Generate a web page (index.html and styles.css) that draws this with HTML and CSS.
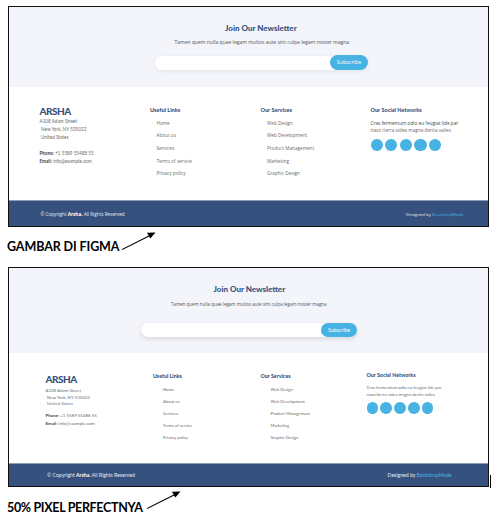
FILE: index.html
```html
<!DOCTYPE html>
<html lang="en">
<head>
<meta charset="utf-8">
<title>Arsha footer comparison</title>
<link rel="stylesheet" href="styles.css">
</head>
<body>
<section class="frame design">
  <div class="newsletter">
    <h2>Join Our Newsletter</h2>
    <p>Tamen quem nulla quae legam multos aute sint culpa legam noster magna</p>
    <div class="subscribe"><span class="button">Subscribe</span></div>
  </div>
  <div class="columns">
    <div class="contact">
      <h3>ARSHA</h3>
      <p>A108 Adam Street</p>
      <p class="indent">New York, NY 535022</p>
      <p class="indent">United States</p>
      <p class="phone"><b>Phone:</b> +1 5589 55488 55</p>
      <p class="email"><b>Email:</b> info@example.com</p>
    </div>
    <div class="links">
      <h4>Useful Links</h4>
      <ul><li>Home</li><li>About us</li><li>Services</li><li>Terms of service</li><li>Privacy policy</li></ul>
    </div>
    <div class="links">
      <h4>Our Services</h4>
      <ul><li>Web Design</li><li>Web Development</li><li>Product Management</li><li>Marketing</li><li>Graphic Design</li></ul>
    </div>
    <div class="social">
      <h4>Our Social Networks</h4>
      <p>Cras fermentum odio eu feugiat lide par</p>
      <p class="second">naso tierra videa magna derita valies</p>
      <div class="dots"><i></i><i></i><i></i><i></i><i></i></div>
    </div>
  </div>
  <footer><span>© Copyright <b>Arsha.</b> All Rights Reserved</span><span class="credit">Designed by <a>BootstrapMade</a></span></footer>
</section>
<div class="caption first"><strong>GAMBAR DI FIGMA</strong>
  <svg width="36" height="20" viewBox="0 0 36 20"><path d="M0 18.500L28 4.500" stroke="#000" stroke-width="1.100"/><path d="M25 1.700L33.500 1.500L28.300 7.600Z"/></svg>
</div>
<section class="frame built">
  <div class="newsletter">
    <h2>Join Our Newsletter</h2>
    <p>Tamen quem nulla quae legam multos aute sint culpa legam noster magna</p>
    <div class="subscribe"><span class="button">Subscribe</span></div>
  </div>
  <div class="columns">
    <div class="contact">
      <h3>ARSHA</h3>
      <p>A108 Adam Street</p>
      <p class="indent">New York, NY 535022</p>
      <p class="indent">United States</p>
      <p class="phone"><b>Phone:</b> +1 5589 55488 55</p>
      <p class="email"><b>Email:</b> info@example.com</p>
    </div>
    <div class="links">
      <h4>Useful Links</h4>
      <ul><li>Home</li><li>About us</li><li>Services</li><li>Terms of service</li><li>Privacy policy</li></ul>
    </div>
    <div class="links">
      <h4>Our Services</h4>
      <ul><li>Web Design</li><li>Web Development</li><li>Product Management</li><li>Marketing</li><li>Graphic Design</li></ul>
    </div>
    <div class="social">
      <h4>Our Social Networks</h4>
      <p>Cras fermentum odio eu feugiat lide par</p>
      <p class="second">naso tierra videa magna derita valies</p>
      <div class="dots"><i></i><i></i><i></i><i></i><i></i></div>
    </div>
  </div>
  <footer><span>© Copyright <b>Arsha.</b> All Rights Reserved</span><span class="credit">Designed by <a>BootstrapMade</a></span></footer>
  <span class="cursor"></span>
</section>
<div class="caption second-caption"><strong>50% PIXEL PERFECTNYA</strong>
  <svg width="36" height="20" viewBox="0 0 36 20"><path d="M0 18.500L28 4.500" stroke="#000" stroke-width="1.100"/><path d="M25 1.700L33.500 1.500L28.300 7.600Z"/></svg>
</div>
</body>
</html>
```
FILE: styles.css
```css
* { box-sizing: border-box; }
html, body { height: 514px; overflow: hidden; }
body { margin: 0; padding: 6px 0 0 8px; background: #fff; font-family: Lato, sans-serif; color: #6c6c6c; }
h2, h3, h4, p, ul { margin: 0; padding: 0; }
ul { list-style: none; }
h2, h3, h4, p, li, .caption, footer { white-space: nowrap; }
h2, h3, h4 { color: #37517e; }

.frame { position: relative; display: flex; flex-direction: column; width: 481px; border: 1px solid #111; background: #fff; }
.newsletter { background: #f3f5fa; }
.newsletter h2 { font-size: 8px; line-height: 10px; font-weight: 900; }
.newsletter p { line-height: 8px; color: #555; }
.subscribe { display: flex; justify-content: flex-end; background: #fff; border-radius: 8px; box-shadow: 0 1px 4px rgba(0, 0, 0, .08); }
.button { background: #47b2e4; color: #fff; border-radius: 8px; text-align: center; font-size: 5.5px; }
.columns { display: grid; flex: 1; }
.columns h3 { font-weight: 900; line-height: 10px; letter-spacing: -.5px; }
.columns h4 { font-size: 5.2px; line-height: 8px; font-weight: 900; }
.contact p { line-height: 8px; }
.contact b { color: #444; }
.indent { padding-left: 1.5px; }
.dots { display: flex; }
.dots i { border-radius: 50%; background: #47b2e4; }
footer { display: flex; justify-content: space-between; background: #37517e; border-top: 1px solid #8b9ab5; color: #e8ecf3; }
footer b { color: #fff; }
footer a { color: #47b2e4; }

.design { height: 221px; }
.design .newsletter { height: 80px; padding-top: 16px; }
.design h2 { margin-left: 216px; }
.design .newsletter p { margin: 5px 0 0 165.500px; font: 5.030px/8px "Open Sans", sans-serif; }
.design .subscribe { width: 213px; height: 14px; margin: 10px 0 0 146px; }
.design .button { width: 38px; height: 15px; margin-top: -1px; line-height: 15px; font-size: 5.400px; font-family: "Open Sans", sans-serif; }
.design .columns { grid-template-columns: 110.500px 110.500px 110px 1fr; padding: 19px 0 0 30.500px; }
.design h3 { font-size: 10px; }
.design .contact p { font-size: 4.650px; }
.design .contact h3 + p { margin-top: 1px; }
.design .contact .phone { margin-top: 8px; }
.design ul { padding: 2.500px 0 0 6.500px; }
.design li { height: 12.700px; line-height: 12.700px; font-size: 4.680px; font-family: "Open Sans", sans-serif; }
.design .columns h4 { font-size: 5.550px; }
.design .social p { font: 4.720px/7px "Open Sans", sans-serif; }
.design .social h4 + p { margin-top: 6px; color: #444; }
.design .dots { gap: 2.300px; margin-top: 5px; }
.design .dots i { width: 12.300px; height: 12.300px; }
.design footer { height: 26px; padding: 0 24.500px 0 31.500px; font: 4.650px/26px "Open Sans", sans-serif; }
.design .credit { font-size: 4.350px; }

.caption { display: flex; align-items: flex-start; color: #000; font-size: 12.500px; line-height: 16px; }
.caption strong { margin-left: -1px; }
.first { height: 40px; padding-top: 4px; }
.first strong { width: 115px; margin-top: 8px; letter-spacing: -.1px; }

.built { height: 220px; }
.built .newsletter { height: 85px; padding-top: 16px; }
.built h2 { margin-left: 204.500px; }
.built .newsletter p { margin: 6px 0 0 162px; font: 4.490px/8px "Open Sans", sans-serif; }
.built .subscribe { width: 216px; height: 14px; margin: 15px 0 0 132px; box-shadow: 0 2px 5px rgba(0, 0, 0, .12); }
.built .button { width: 36px; height: 14px; line-height: 15px; font-size: 5.200px; }
.built .columns { grid-template-columns: 107.500px 107.500px 106px 1fr; padding: 19px 0 0 36.500px; }
.built h3 { font-size: 10px; margin-top: 2px; }
.built .columns h4 { font-size: 5.300px; }
.built .contact p { font-size: 4.400px; line-height: 6.600px; }
.built .contact h3 + p { margin-top: 4px; }
.built .contact .phone { margin-top: 5px; }
.built .contact .email { margin-top: 1.500px; }
.built ul { padding: 4px 0 0 10px; }
.built li { height: 12.050px; line-height: 12px; font-size: 4.180px; }
.built .social { margin-top: -1px; }
.built .social p { font-size: 4.320px; line-height: 7px; }
.built h4 + p { margin-top: 5px; }
.built .dots { gap: 2.100px; margin-top: 4px; }
.built .dots i { width: 11.700px; height: 11.700px; }
.built footer { height: 23px; font-size: 5.140px; line-height: 22px; padding: 0 36.500px 0 38px; }

.cursor { position: absolute; left: 481px; top: 207px; width: 1px; height: 13px; background: #000; }

.second-caption { padding-top: 3px; }
.second-caption strong { width: 140px; margin-top: 10px; letter-spacing: -.33px; }
```
